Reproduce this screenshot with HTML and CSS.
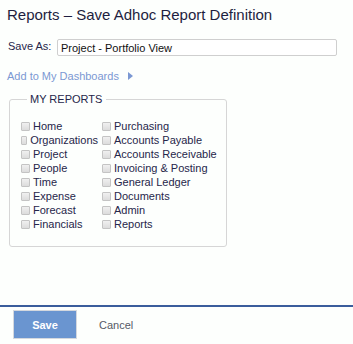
FILE: index.html
```html
<!DOCTYPE html>
<html lang="en">
<head>
    <meta charset="UTF-8">
    <meta name="viewport" content="width=device-width, initial-scale=1.0">
    <title>Save Adhoc Report Definition</title>
    <link rel="stylesheet" href="styles.css">
</head>
<body>
    <div class="content">
        <h1 class="title">Reports &ndash; Save Adhoc Report Definition</h1>
        <div class="save-row">
            <label for="reportName">Save As:</label>
            <input type="text" id="reportName" value="Project - Portfolio View">
        </div>
        <a href="#" class="dash-link">Add to My Dashboards <span class="arrow"></span></a>
        <fieldset class="reports">
            <legend>MY REPORTS</legend>
            <div class="report-grid">
                <div class="report-col">
                    <label class="report"><span class="box"></span>Home</label>
                    <label class="report"><span class="box"></span>Organizations</label>
                    <label class="report"><span class="box"></span>Project</label>
                    <label class="report"><span class="box"></span>People</label>
                    <label class="report"><span class="box"></span>Time</label>
                    <label class="report"><span class="box"></span>Expense</label>
                    <label class="report"><span class="box"></span>Forecast</label>
                    <label class="report"><span class="box"></span>Financials</label>
                </div>
                <div class="report-col">
                    <label class="report"><span class="box"></span>Purchasing</label>
                    <label class="report"><span class="box"></span>Accounts Payable</label>
                    <label class="report"><span class="box"></span>Accounts Receivable</label>
                    <label class="report"><span class="box"></span>Invoicing &amp; Posting</label>
                    <label class="report"><span class="box"></span>General Ledger</label>
                    <label class="report"><span class="box"></span>Documents</label>
                    <label class="report"><span class="box"></span>Admin</label>
                    <label class="report"><span class="box"></span>Reports</label>
                </div>
            </div>
        </fieldset>
    </div>
    <div class="actions">
        <button type="button" class="btn-save">Save</button>
        <button type="button" class="btn-cancel">Cancel</button>
    </div>
</body>
</html>
```

FILE: styles.css
```css
body {
    font-family: "Liberation Sans", Arial, sans-serif;
    font-size: 11px;
    color: #26264a;
    background-color: #fdfffd;
    margin: 0;
    min-height: 100vh;
    display: flex;
    flex-direction: column;
}
.content {
    padding: 6px 8px 0 8px;
}
.title {
    font-size: 15px;
    font-weight: normal;
    color: #1e1e40;
    margin: 0;
    margin-left: -1px;
    line-height: 18px;
}
.save-row {
    display: flex;
    align-items: center;
    margin-top: 15px;
}
.save-row label {
    width: 49px;
    margin-top: -4px;
}
.save-row input {
    width: 280px;
    height: 17px;
    box-sizing: border-box;
    border: 1px solid #cfcfcf;
    border-radius: 2px;
    padding: 0 3px;
    font-family: inherit;
    font-size: 11px;
    color: #111;
    background: #fff;
}
.dash-link {
    display: inline-flex;
    align-items: center;
    margin-top: 14px;
    margin-left: -1px;
    color: #7b98d3;
    text-decoration: none;
}
.arrow {
    display: inline-block;
    margin-left: 9px;
    width: 0;
    height: 0;
    border-top: 4px solid transparent;
    border-bottom: 4px solid transparent;
    border-left: 5px solid #7b98d3;
}
.reports {
    width: 218px;
    box-sizing: border-box;
    margin: 11px 0 0 1px;
    padding: 14px 0 15px 11px;
    border: 1px solid #d6d6d6;
    border-radius: 3px;
}
.reports legend {
    padding: 0 4px 0 3px;
    margin-left: 6px;
    color: #26264a;
}
.report-grid {
    display: flex;
    gap: 4px;
}
.report {
    display: flex;
    align-items: center;
    height: 14px;
    white-space: nowrap;
}
.report-col:first-child {
    width: 77px;
}
.box {
    width: 7px;
    height: 7px;
    margin-right: 3px;
    border: 1px solid #c4c4c4;
    border-radius: 1px;
    background: linear-gradient(#f0f0f0, #dcdcdc);
}
.actions {
    margin-top: auto;
    border-top: 2px solid #3a5d9c;
    padding: 3px 13px 5px 13px;
    display: flex;
    align-items: center;
}
.btn-save {
    width: 64px;
    height: 29px;
    background-color: #6a95d0;
    border: 1px solid #d4d8de;
    color: #fff;
    font-family: inherit;
    font-size: 11px;
    font-weight: bold;
    cursor: pointer;
}
.btn-cancel {
    background: none;
    border: none;
    margin-left: 16px;
    color: #555a66;
    font-family: inherit;
    font-size: 11px;
    cursor: pointer;
}
```
